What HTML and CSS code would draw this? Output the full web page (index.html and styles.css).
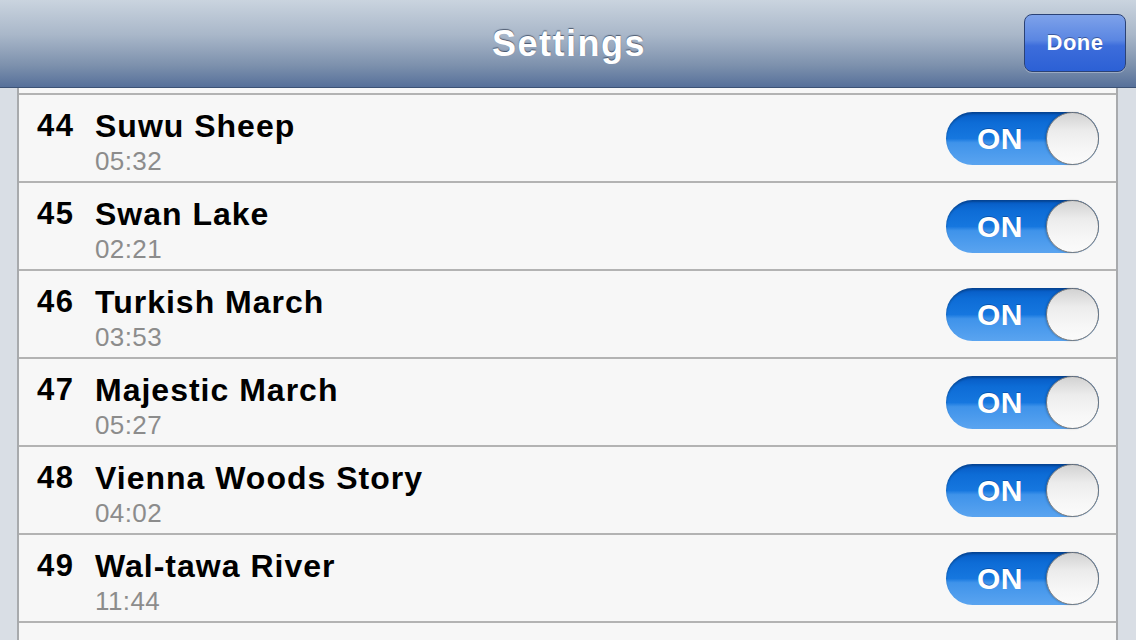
FILE: index.html
```html
<!DOCTYPE html>
<html>
    <head>
        <link rel="stylesheet" href="styles.css">
        <title>Settings</title>
    </head>
    <body>
        <div class="navbar">
            <h1>Settings</h1>
            <button class="done">Done</button>
        </div>
        <div class="list">
            <div class="row top"></div>
            <div class="row">
                <span class="num">44</span>
                <span class="title">Suwu Sheep</span>
                <span class="time">05:32</span>
                <div class="switch"><span>ON</span><div class="knob"></div></div>
            </div>
            <div class="row">
                <span class="num">45</span>
                <span class="title">Swan Lake</span>
                <span class="time">02:21</span>
                <div class="switch"><span>ON</span><div class="knob"></div></div>
            </div>
            <div class="row">
                <span class="num">46</span>
                <span class="title">Turkish March</span>
                <span class="time">03:53</span>
                <div class="switch"><span>ON</span><div class="knob"></div></div>
            </div>
            <div class="row">
                <span class="num">47</span>
                <span class="title">Majestic March</span>
                <span class="time">05:27</span>
                <div class="switch"><span>ON</span><div class="knob"></div></div>
            </div>
            <div class="row">
                <span class="num">48</span>
                <span class="title">Vienna Woods Story</span>
                <span class="time">04:02</span>
                <div class="switch"><span>ON</span><div class="knob"></div></div>
            </div>
            <div class="row">
                <span class="num">49</span>
                <span class="title">Wal-tawa River</span>
                <span class="time">11:44</span>
                <div class="switch"><span>ON</span><div class="knob"></div></div>
            </div>
            <div class="row bottom"></div>
        </div>
    </body>
</html>
```
FILE: styles.css
```css
body {
    margin: 0;
    height: 640px;
    overflow: hidden;
    font-family: "Liberation Sans", Arial, sans-serif;
    background-color: #d9dee5;
}
.navbar {
    height: 87px;
    border-bottom: 1px solid #3c5275;
    background-image: linear-gradient(to bottom, #cad4df 0%, #a9b7c9 40%, #7d91ad 75%, #56709a 100%);
    display: flex;
    align-items: center;
    justify-content: center;
    position: relative;
}
.navbar h1 {
    margin: 0 0 0 2px;
    color: white;
    font-size: 36px;
    letter-spacing: 1.5px;
    text-shadow: 0 -1px 1px rgba(40, 52, 75, 0.7);
}
.done {
    position: absolute;
    right: 10px;
    top: 14px;
    width: 102px;
    height: 58px;
    border: 1px solid #2b4275;
    border-radius: 8px;
    background-image: linear-gradient(to bottom, #7ea2ea 0%, #5a86e2 45%, #3d6ddb 55%, #2c60d5 100%);
    box-shadow: 0 1px 0 rgba(255, 255, 255, 0.3);
    color: white;
    font-family: "Liberation Sans", Arial, sans-serif;
    font-weight: bold;
    font-size: 22px;
    letter-spacing: 0.5px;
    text-shadow: 0 -1px 0 rgba(20, 40, 90, 0.5);
    padding: 0;
}
.list {
    margin: 0 18px 0 17px;
    border-left: 2px solid #a8aaad;
    border-right: 2px solid #a8aaad;
    background-color: #f7f7f7;
}
.row {
    height: 88px;
    border-bottom: 2px solid #b3b3b3;
    display: grid;
    grid-template-columns: 58px 1fr auto;
    grid-template-rows: 34px 28px;
    align-content: start;
    padding: 14px 0 0 18px;
    box-sizing: border-box;
}
.row.top {
    height: 7px;
    padding: 0;
}
.row.bottom {
    height: 17px;
    border-bottom: none;
}
.num, .title {
    font-weight: bold;
    font-size: 32px;
    line-height: 34px;
    letter-spacing: 1px;
    color: #000;
}
.num {
    font-size: 31px;
    letter-spacing: 1.5px;
}
.time {
    grid-column: 2;
    font-size: 26px;
    line-height: 28px;
    margin-top: 4px;
    color: #8c8c8c;
    letter-spacing: 0.4px;
}
.switch {
    grid-column: 3;
    grid-row: 1 / 3;
    align-self: start;
    margin: 3px 17px 0 0;
    width: 153px;
    height: 53px;
    border-radius: 27px;
    background-image: linear-gradient(to bottom, #0659c2 0%, #0d6cd6 20%, #1677df 50%, #3f93ea 58%, #5aa4f0 100%);
    box-shadow: inset 0 2px 2px rgba(0, 0, 0, 0.25);
    display: flex;
    align-items: center;
    position: relative;
}
.switch span {
    width: 104px;
    text-align: center;
    color: white;
    font-weight: bold;
    font-size: 30px;
    letter-spacing: 0.5px;
    padding-left: 2px;
    text-shadow: 0 -1px 0 rgba(0, 40, 110, 0.4);
}
.knob {
    position: absolute;
    right: 0;
    top: 0;
    width: 51px;
    height: 51px;
    border-radius: 50%;
    border: 1px solid #7a7a7a;
    box-shadow: -1px 0 2px rgba(0, 0, 0, 0.2);
    background-image: linear-gradient(to bottom, #d2d2d2 0%, #ececec 35%, #f6f6f6 70%, #fbfbfb 100%);
}
```
